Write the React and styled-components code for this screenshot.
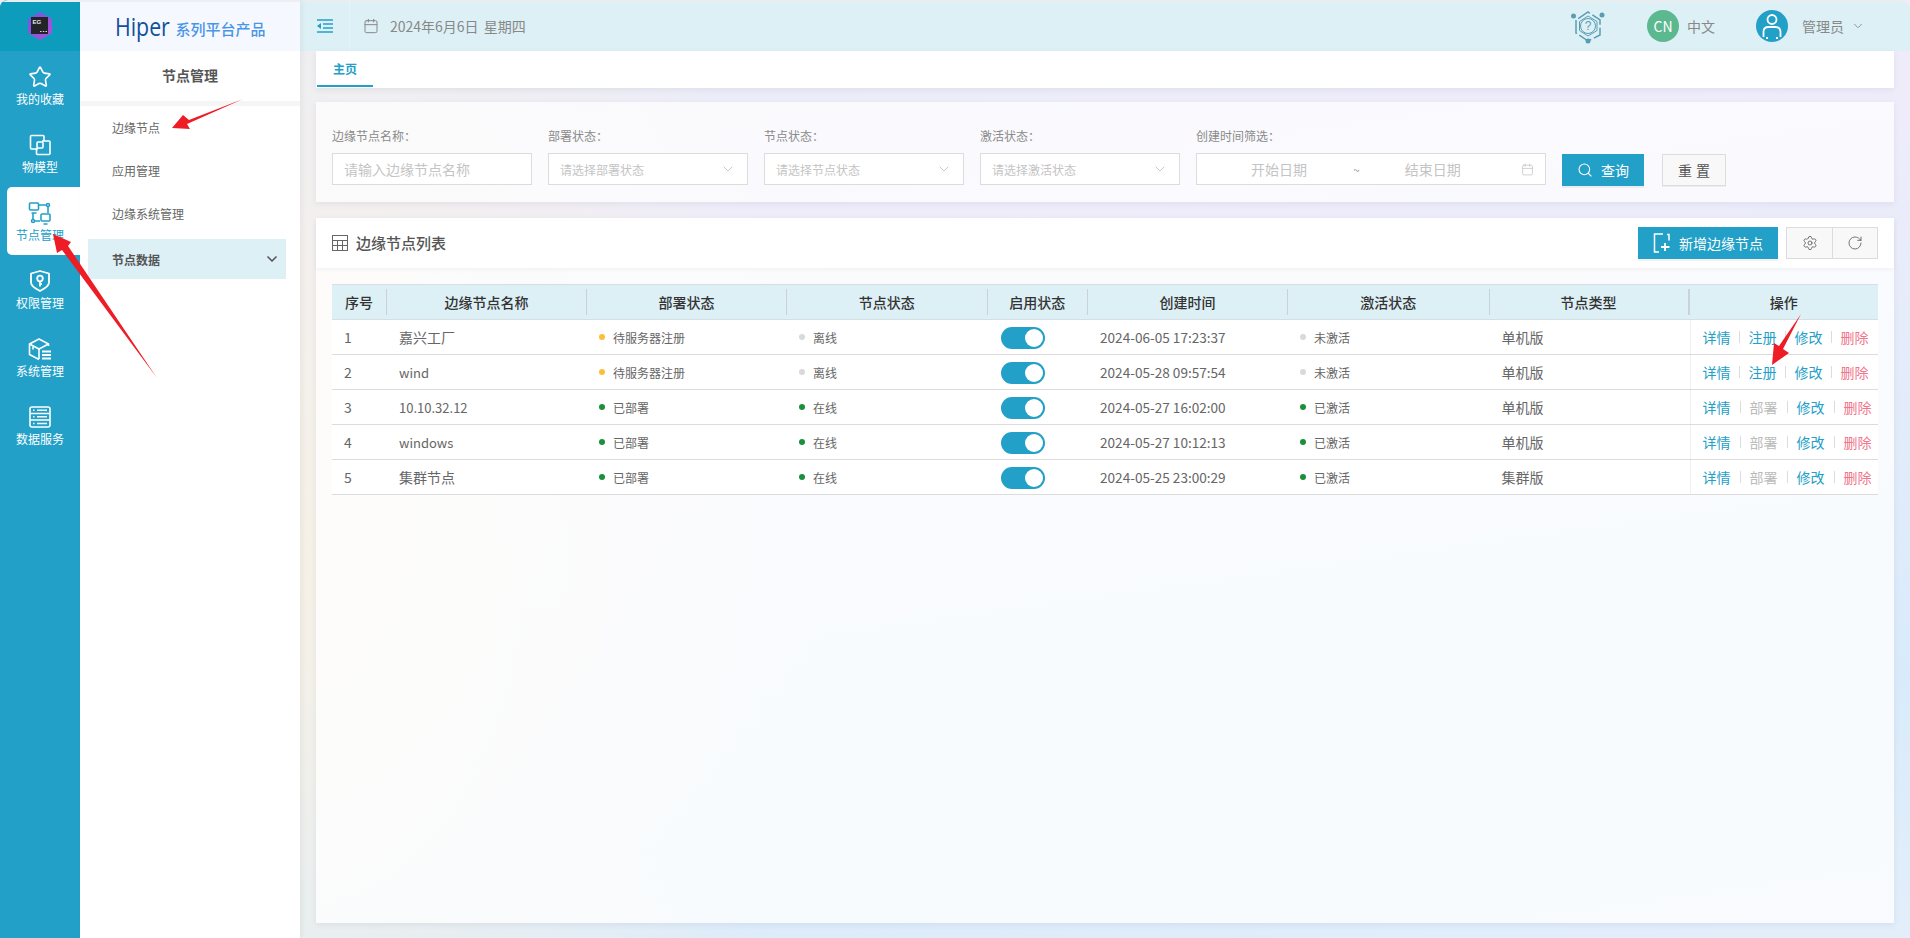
import React from "react";
import styled, { createGlobalStyle } from "styled-components";
import { Star, ChevronDown, Search, Calendar, Settings, RotateCw } from "lucide-react";

const blue = "#22a0c8";
const light = "#ddf0f6";

const Global = createGlobalStyle`
  html, body { margin: 0; padding: 0; }
  body {
    font-family: "Noto Sans CJK SC", "Noto Sans", sans-serif;
    color: #666;
    overflow: hidden;
  }
  * { box-sizing: border-box; }
`;

const Page = styled.div`
  position: relative;
  display: grid;
  grid-template-columns: 80px 220px 1fr;
  width: 100%;
  height: 100vh;
  background:
    radial-gradient(ellipse 520px 800px at 300px 60%, #f6f1e6 0%, rgba(246, 241, 230, 0) 100%),
    linear-gradient(172deg, #e9edf6 0%, #efecfa 30%, #d9ebfb 78%, #e3eefa 100%);
`;

const Rail = styled.nav`
  display: flex;
  flex-direction: column;
  background: ${blue};
  border-top-left-radius: 8px;
  overflow: hidden;
`;

const RailTop = styled.div`
  display: flex;
  align-items: center;
  justify-content: center;
  height: 51px;
  background: #0e9cbc;
  box-shadow: inset 0 2px 0 #e9edf0;
`;

const RailItem = styled.div`
  display: flex;
  flex-direction: column;
  align-items: center;
  height: 68px;
  margin-left: ${p => (p.$active ? "7px" : "0")};
  padding-top: 14px;
  padding-right: ${p => (p.$active ? "7px" : "0")};
  font-size: 12px;
  line-height: 16px;
  color: ${p => (p.$active ? blue : "#fff")};
  background: ${p => (p.$active ? "#fff" : "transparent")};
  border-radius: ${p => (p.$active ? "5px 0 0 5px" : "0")};

  svg {
    display: block;
    margin-bottom: 2px;
  }
`;

const Sidebar = styled.aside`
  display: flex;
  flex-direction: column;
  background: #fff;
  box-shadow: 2px 0 6px rgba(0, 0, 0, 0.05);
  z-index: 1;
`;

const LogoBand = styled.div`
  display: flex;
  align-items: center;
  justify-content: center;
  gap: 6px;
  height: 51px;
  background: #f5f9ff;
  box-shadow: inset 0 2px 0 #edeff3;
`;

const LogoWord = styled.span`
  display: inline-block;
  margin-right: -12px;
  font-family: "Open Sans", sans-serif;
  font-size: 26px;
  line-height: 30px;
  font-weight: 500;
  color: #10509c;
  transform: scaleX(0.82);
  transform-origin: left center;
`;

const LogoTail = styled.span`
  font-size: 15px;
  font-weight: 500;
  color: #4a94e6;
  margin-top: 5px;
`;

const SideTitle = styled.div`
  height: 55px;
  border-bottom: 5px solid #f5f5f5;
  text-align: center;
  font-size: 14px;
  font-weight: 700;
  line-height: 48px;
  color: #555;
`;

const SideMenu = styled.div`
  display: flex;
  flex-direction: column;
  padding: 0 14px 0 8px;
`;

const SideItem = styled.div`
  display: flex;
  align-items: center;
  justify-content: space-between;
  height: ${p => (p.$open ? "40px" : "43px")};
  margin-top: ${p => (p.$open ? "4px" : "0")};
  padding: 0 6px 0 24px;
  font-size: 12px;
  font-weight: ${p => (p.$open ? 700 : 400)};
  color: ${p => (p.$open ? "#555" : "#666")};
  background: ${p => (p.$open ? light : "transparent")};
`;

const Main = styled.main`
  display: flex;
  flex-direction: column;
  min-width: 0;
`;

const TopBar = styled.header`
  display: flex;
  align-items: center;
  flex: none;
  height: 51px;
  padding-right: 45px;
  background: ${light};
  border-top-right-radius: 10px;
  box-shadow: inset 0 2px 0 #e9edf0;
  font-size: 14px;
  color: #888;
`;

const Toggle = styled.div`
  display: flex;
  align-items: center;
  width: 50px;
  height: 100%;
  padding-left: 17px;
  border-right: 1px solid #e6f4f8;
`;

const DateText = styled.div`
  display: flex;
  align-items: center;
  gap: 11px;
  margin-left: 13px;
  flex: 1;
  word-spacing: 2px;
`;

const HelpWrap = styled.div`
  display: flex;
  margin-right: 41px;
`;

const Avatar = styled.div`
  display: flex;
  align-items: center;
  justify-content: center;
  width: 32px;
  height: 32px;
  border-radius: 50%;
  color: #fff;
  font-size: 14px;
  background: ${p => p.$bg};
  margin-right: ${p => p.$mr}px;
`;

const TopLabel = styled.span`
  margin-right: ${p => p.$mr}px;
`;

const Content = styled.div`
  display: flex;
  flex-direction: column;
  flex: 1;
  min-height: 0;
  padding: 0 16px 15px;
`;

const Tabs = styled.div`
  flex: none;
  height: 37px;
  background: #fff;
  box-shadow: 0 2px 6px rgba(60, 70, 120, 0.08);
`;

const Tab = styled.div`
  width: 56px;
  height: 36px;
  margin-left: 1px;
  border-bottom: 2px solid ${blue};
  text-align: center;
  font-size: 12px;
  font-weight: 700;
  line-height: 36px;
  color: ${blue};
`;

const FilterCard = styled.section`
  display: flex;
  align-items: flex-start;
  flex: none;
  gap: 16px;
  height: 100px;
  margin-top: 14px;
  padding: 26px 16px 0;
  background: rgba(255, 255, 255, 0.72);
  box-shadow: 0 2px 6px rgba(60, 70, 120, 0.08);
`;

const Field = styled.div`
  display: flex;
  flex-direction: column;
  gap: 9px;
  width: ${p => p.$w || 200}px;
`;

const FieldLabel = styled.label`
  font-size: 12px;
  line-height: 16px;
  color: #8a8a8a;
`;

const Box = styled.div`
  display: flex;
  align-items: center;
  justify-content: space-between;
  height: 32px;
  padding: 0 11px;
  background: #fff;
  border: 1px solid #dcdcdc;
  font-size: ${p => p.$fs || 12}px;
  color: #c4c4c4;
`;

const DateBox = styled(Box)`
  justify-content: flex-start;

  svg {
    margin-left: auto;
  }
`;

const RangeText = styled.span`
  font-size: 14px;
  margin-left: ${p => p.$ml}px;
`;

const Tilde = styled.span`
  font-size: 12px;
  color: #999;
  margin-left: 46px;
`;

const PrimaryBtn = styled.button`
  display: flex;
  align-items: center;
  justify-content: center;
  gap: 8px;
  width: ${p => p.$w}px;
  height: 32px;
  margin-top: ${p => p.$mt || 0}px;
  padding: 0;
  border: 0;
  background: ${blue};
  color: #fff;
  font: inherit;
  font-size: 14px;
  box-shadow: 0 2px 0 rgba(0, 0, 0, 0.05);
`;

const ResetBtn = styled.button`
  width: 64px;
  height: 32px;
  margin: 26px 0 0 2px;
  padding: 0;
  border: 1px solid #dcdcdc;
  background: #f8f8f8;
  color: #555;
  font: inherit;
  font-size: 14px;
  letter-spacing: 4px;
  text-indent: 4px;
  box-shadow: 0 1px 0 rgba(0, 0, 0, 0.05);
`;

const ListCard = styled.section`
  display: flex;
  flex-direction: column;
  flex: 1;
  min-height: 0;
  margin-top: 16px;
  background: rgba(255, 255, 255, 0.78);
  box-shadow: 0 2px 6px rgba(60, 70, 120, 0.08);
`;

const ListHead = styled.div`
  display: flex;
  align-items: center;
  flex: none;
  height: 50px;
  padding: 0 16px;
  background: #fff;
  box-shadow: 0 2px 4px rgba(0, 0, 0, 0.04);
`;

const ListTitle = styled.h2`
  flex: 1;
  margin: 0 0 2px 8px;
  font-size: 15px;
  font-weight: 500;
  color: #555;
`;

const IconGroup = styled.div`
  display: flex;
  margin-left: 8px;
  border: 1px solid #dcdcdc;
  background: #f8f8f8;
`;

const IconBtn = styled.div`
  display: flex;
  align-items: center;
  justify-content: center;
  width: 45px;
  height: 30px;
  color: #555;
  & + & {
    border-left: 1px solid #dcdcdc;
  }
`;

const Table = styled.div`
  margin: 16px 16px 0;
`;

const columns = "55px 200px 200px 200.5px 100.5px 200px 201.5px 200px 188.5px";

const HeadRow = styled.div`
  display: grid;
  grid-template-columns: ${columns};
  align-items: center;
  height: 36px;
  background: ${light};
  border-top: 1px solid #d5dfe4;
  border-bottom: 1px solid #d5dfe4;
`;

const HeadCell = styled.div`
  height: 26px;
  line-height: 26px;
  text-align: center;
  font-size: 14px;
  font-weight: 500;
  color: #333;
  border-right: ${p => (p.$last ? "0" : `${p.$thick ? 2 : 1}px solid #c9d2d6`)};
`;

const Row = styled.div`
  display: grid;
  grid-template-columns: ${columns};
  align-items: center;
  height: 35px;
  background: #fff;
  border-bottom: 1px solid #dcdcdc;
`;

const Cell = styled.div`
  padding-left: 12px;
  font-size: ${p => p.$fs || 14}px;
  color: #666;
  white-space: nowrap;
`;

const OpsCell = styled(Cell)`
  display: flex;
  align-items: center;
  height: 100%;
  border-left: 1px solid #f0f0f0;
`;

const StatusCell = styled(Cell)`
  display: flex;
  align-items: center;
  gap: 8px;
  font-size: 12px;
`;

const Dot = styled.i`
  width: 6px;
  height: 6px;
  border-radius: 50%;
  background: ${p => p.$c};
`;

const Switch = styled.div`
  display: flex;
  align-items: center;
  justify-content: flex-end;
  width: 44px;
  height: 22px;
  margin: 2px 0 0 1px;
  padding-right: 2px;
  border-radius: 11px;
  background: ${blue};
`;

const Knob = styled.div`
  width: 18px;
  height: 18px;
  border-radius: 50%;
  background: #fff;
`;

const Op = styled.span`
  color: ${p => p.$c || blue};
`;

const Sep = styled.i`
  width: 1px;
  height: 12px;
  margin: 0 ${p => p.$m}px;
  background: #dcdcdc;
`;

const ArrowLayer = styled.svg`
  position: absolute;
  top: 0;
  left: 0;
  width: 100%;
  height: 100%;
  pointer-events: none;
  z-index: 5;
`;

const ico = { fill: "none", stroke: "currentColor", strokeWidth: 1.6, strokeLinejoin: "round" };

const CopyIcon = () => (
  <svg width="24" height="24" viewBox="0 0 24 24" {...ico}>
    <path d="M10 16H3.5a1 1 0 0 1-1-1V3.5a1 1 0 0 1 1-1H15a1 1 0 0 1 1 1V8" />
    <path d="M14 8h7a1 1 0 0 1 1 1v11.500a1 1 0 0 1-1 1H9.500a1 1 0 0 1-1-1V15" />
    <rect x="9" y="9" width="6" height="6" rx="1" />
  </svg>
);

const NodeIcon = () => (
  <svg width="24" height="24" viewBox="0 0 24 24" {...ico}>
    <rect x="1.500" y="2" width="9" height="7" rx="1" />
    <path d="M3.500 12h5" />
    <rect x="13" y="13" width="9" height="7" rx="1" />
    <path d="M15.500 23h4" />
    <path d="M10.500 4h8" />
    <path d="M20 6v6" />
    <path d="M5 12v6.500" />
    <path d="M6.500 20H12" />
    <circle cx="20" cy="4" r="1.500" />
    <circle cx="5" cy="20" r="1.500" />
  </svg>
);

const ShieldIcon = () => (
  <svg width="24" height="24" viewBox="0 0 24 24" {...ico} strokeWidth="1.800">
    <path d="M3 4.500L12 2l9 2.500v9c0 3-3 5.500-9 8.500-6-3-9-5.500-9-8.500z" />
    <circle cx="12" cy="9.500" r="2.800" />
    <path d="M12 12.500v5M12 15h2" />
  </svg>
);

const BoxIcon = () => (
  <svg width="24" height="24" viewBox="0 0 24 24" {...ico}>
    <path d="M20.500 9V7L11 2 1.500 7v10.500L11 22.500" />
    <path d="M1.500 7L11 12l9.500-5" />
    <path d="M11 12v10" />
    <path d="M5 9.500v3" />
    <path d="M14 14.500h9M14 18h9M14 21.500h9" strokeWidth="1.800" />
  </svg>
);

const DataIcon = () => (
  <svg width="24" height="24" viewBox="0 0 24 24" {...ico}>
    <rect x="2" y="2" width="20" height="20" rx="2" />
    <path d="M2 8.500h20M2 15h20" />
    <path d="M9 5.300h10M9 11.800h10M9 18.500h10" />
    <path d="M5 5.300h1.500M5 11.800h1.500M5 18.500h1.500" />
  </svg>
);

const AppLogo = () => (
  <svg width="26" height="28" viewBox="0 0 26 28">
    <defs>
      <linearGradient id="hexFill" x1="0" y1="0" x2="1" y2="1">
        <stop offset="0" stopColor="#6a5be0" />
        <stop offset="1" stopColor="#b34fd8" />
      </linearGradient>
    </defs>
    <path d="M13 0l12 7v14l-12 7-12-7V7z" fill="url(#hexFill)" />
    <rect x="4" y="5" width="17" height="17" fill="#22242a" />
    <text x="5.500" y="11.500" fontSize="6" fontWeight="700" fill="#e8e8e8" fontFamily="Liberation Sans, sans-serif">
      EG
    </text>
    <path d="M13 19.500h1.500M15.800 19.500h1.500M18.500 19.500H20" stroke="#ddd" strokeWidth="1.200" />
  </svg>
);

const MenuToggle = () => (
  <svg width="16" height="14" viewBox="0 0 16 14" fill="none" stroke={blue} strokeWidth="1.300">
    <path d="M0 1h16M6 5h10M6 9h10M0 13h16" />
    <path d="M0 7l4-3v6z" fill={blue} stroke="none" />
  </svg>
);

const HelpHex = () => (
  <svg width="36" height="38" viewBox="0 0 36 38" fill="none" stroke="#5a9db2" strokeWidth="1.500">
    <path d="M6 13v13l12 8 12-6V13L18 5z" strokeDasharray="14 3" />
    <path d="M9.500 14.500L18 9l9 5.500v9L18 29l-8.500-5.500z" strokeWidth="1" />
    <circle cx="18" cy="19" r="7.500" strokeWidth="1" />
    <text x="18" y="23" textAnchor="middle" fontSize="12" fill="#5a9db2" stroke="none" fontFamily="Liberation Sans, sans-serif">
      ?
    </text>
    <circle cx="3.500" cy="9" r="2.500" fill="#5a9db2" stroke="none" />
    <circle cx="32" cy="8" r="2.500" fill="#5a9db2" stroke="none" />
    <circle cx="18" cy="34" r="2.500" fill="#5a9db2" stroke="none" />
  </svg>
);

const UserGlyph = () => (
  <svg width="22" height="26" viewBox="0 0 22 26" fill="none" stroke="#fff" strokeWidth="1.800">
    <circle cx="11" cy="6.500" r="4.500" />
    <path d="M2.500 24v-5c0-3 2-5 5-5h7c3 0 5 2 5 5v5" />
    <path d="M5 25h2M15 25h2" />
  </svg>
);

const TableGlyph = () => (
  <svg width="16" height="16" viewBox="0 0 16 16" fill="none" stroke="#666" strokeWidth="1">
    <rect x="0.500" y="0.500" width="15" height="15" />
    <path d="M0.500 5.500h15M0.500 10.500h15M5.500 5.500v10M10.500 5.500v10" />
  </svg>
);

const AddGlyph = () => (
  <svg width="18" height="20" viewBox="0 0 18 20" fill="none" stroke="#fff" strokeWidth="1.500">
    <path d="M10 1H1.500v18H6" />
    <path d="M14 1.500h2v6" />
    <path d="M12 10v8M8 14h8.500" strokeWidth="1.800" />
  </svg>
);

const railItems = [
  { label: "我的收藏", icon: <Star size={24} strokeWidth={1.6} /> },
  { label: "物模型", icon: <CopyIcon /> },
  { label: "节点管理", icon: <NodeIcon />, active: true },
  { label: "权限管理", icon: <ShieldIcon /> },
  { label: "系统管理", icon: <BoxIcon /> },
  { label: "数据服务", icon: <DataIcon /> },
];

const filters = [
  { label: "部署状态：", hint: "请选择部署状态" },
  { label: "节点状态：", hint: "请选择节点状态" },
  { label: "激活状态：", hint: "请选择激活状态" },
];

const heads = ["序号", "边缘节点名称", "部署状态", "节点状态", "启用状态", "创建时间", "激活状态", "节点类型", "操作"];

const green = "#1a8f3c";
const grey = "#d9d9d9";
const amber = "#fbbf3c";

const rows = [
  { name: "嘉兴工厂", deploy: "待服务器注册", dc: amber, node: "离线", nc: grey, time: "2024-06-05 17:23:37", act: "未激活", ac: grey, type: "单机版", op: "注册" },
  { name: "wind", latin: true, deploy: "待服务器注册", dc: amber, node: "离线", nc: grey, time: "2024-05-28 09:57:54", act: "未激活", ac: grey, type: "单机版", op: "注册" },
  { name: "10.10.32.12", latin: true, deploy: "已部署", dc: green, node: "在线", nc: green, time: "2024-05-27 16:02:00", act: "已激活", ac: green, type: "单机版", op: "部署" },
  { name: "windows", latin: true, deploy: "已部署", dc: green, node: "在线", nc: green, time: "2024-05-27 10:12:13", act: "已激活", ac: green, type: "单机版", op: "部署" },
  { name: "集群节点", deploy: "已部署", dc: green, node: "在线", nc: green, time: "2024-05-25 23:00:29", act: "已激活", ac: green, type: "集群版", op: "部署" },
];

export default function App() {
  return (
    <Page>
      <Global />
      <Rail>
        <RailTop>
          <AppLogo />
        </RailTop>
        {railItems.map(item => (
          <RailItem key={item.label} $active={item.active}>
            {item.icon}
            {item.label}
          </RailItem>
        ))}
      </Rail>

      <Sidebar>
        <LogoBand>
          <LogoWord>Hiper</LogoWord>
          <LogoTail>系列平台产品</LogoTail>
        </LogoBand>
        <SideTitle>节点管理</SideTitle>
        <SideMenu>
          <SideItem>边缘节点</SideItem>
          <SideItem>应用管理</SideItem>
          <SideItem>边缘系统管理</SideItem>
          <SideItem $open>
            节点数据
            <ChevronDown size={16} strokeWidth={2.5} color="#555" />
          </SideItem>
        </SideMenu>
      </Sidebar>

      <Main>
        <TopBar>
          <Toggle>
            <MenuToggle />
          </Toggle>
          <DateText>
            <Calendar size={16} strokeWidth={1.5} color="#888" />
            2024年6月6日 星期四
          </DateText>
          <HelpWrap>
            <HelpHex />
          </HelpWrap>
          <Avatar $bg="#5cb88e" $mr={8}>CN</Avatar>
          <TopLabel $mr={41}>中文</TopLabel>
          <Avatar $bg={blue} $mr={14}>
            <UserGlyph />
          </Avatar>
          <TopLabel $mr={7}>管理员</TopLabel>
          <ChevronDown size={14} strokeWidth={1.5} color="#888" />
        </TopBar>

        <Content>
          <Tabs>
            <Tab>主页</Tab>
          </Tabs>

          <FilterCard>
            <Field>
              <FieldLabel>边缘节点名称：</FieldLabel>
              <Box $fs={14}>请输入边缘节点名称</Box>
            </Field>
            {filters.map(f => (
              <Field key={f.label}>
                <FieldLabel>{f.label}</FieldLabel>
                <Box>
                  {f.hint}
                  <ChevronDown size={16} strokeWidth={1} color="#aaa" />
                </Box>
              </Field>
            ))}
            <Field $w={350}>
              <FieldLabel>创建时间筛选：</FieldLabel>
              <DateBox>
                <RangeText $ml={43}>开始日期</RangeText>
                <Tilde>~</Tilde>
                <RangeText $ml={45}>结束日期</RangeText>
                <Calendar size={13} strokeWidth={1.2} color="#bbb" />
              </DateBox>
            </Field>
            <PrimaryBtn $w={82} $mt={26}>
              <Search size={16} strokeWidth={1.6} />
              查询
            </PrimaryBtn>
            <ResetBtn>重置</ResetBtn>
          </FilterCard>

          <ListCard>
            <ListHead>
              <TableGlyph />
              <ListTitle>边缘节点列表</ListTitle>
              <PrimaryBtn $w={140}>
                <AddGlyph />
                新增边缘节点
              </PrimaryBtn>
              <IconGroup>
                <IconBtn>
                  <Settings size={16} strokeWidth={1.2} />
                </IconBtn>
                <IconBtn>
                  <RotateCw size={16} strokeWidth={1.2} />
                </IconBtn>
              </IconGroup>
            </ListHead>
            <Table>
              <HeadRow>
                {heads.map((h, i) => (
                  <HeadCell key={h} $last={i === heads.length - 1} $thick={i === heads.length - 2}>
                    {h}
                  </HeadCell>
                ))}
              </HeadRow>
              {rows.map((r, i) => {
                const m = r.op === "部署" ? 9 : 8.5;
                return (
                  <Row key={r.name}>
                    <Cell>{i + 1}</Cell>
                    <Cell $fs={r.latin ? 13 : 14}>{r.name}</Cell>
                    <StatusCell><Dot $c={r.dc} />{r.deploy}</StatusCell>
                    <StatusCell><Dot $c={r.nc} />{r.node}</StatusCell>
                    <Cell><Switch><Knob /></Switch></Cell>
                    <Cell $fs={13.6}>{r.time}</Cell>
                    <StatusCell><Dot $c={r.ac} />{r.act}</StatusCell>
                    <Cell>{r.type}</Cell>
                    <OpsCell>
                      <Op>详情</Op>
                      <Sep $m={m} />
                      <Op $c={r.op === "部署" ? "#bbb" : blue}>{r.op}</Op>
                      <Sep $m={m} />
                      <Op>修改</Op>
                      <Sep $m={m} />
                      <Op $c="#f0768a">删除</Op>
                    </OpsCell>
                  </Row>
                );
              })}
            </Table>
          </ListCard>
        </Content>
      </Main>

      <ArrowLayer>
        <g fill="#ee1c25">
          <polygon points="243,99 189,120 183,115 172,128 190,129 187,124" />
          <polygon points="157,378 68,246 71,242 53,234 57,253 62,250" />
          <polygon points="1801,314 1783,349 1789,353 1772,365 1774,343 1779,346" />
        </g>
      </ArrowLayer>
    </Page>
  );
}
